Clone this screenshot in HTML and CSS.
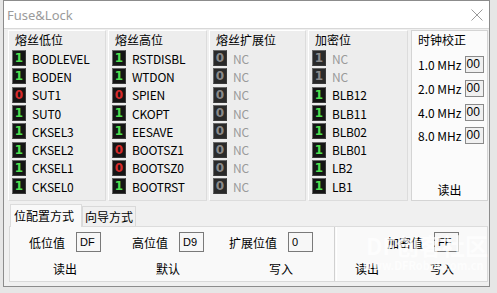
FILE: index.html
```html
<!DOCTYPE html>
<html lang="zh">

<head>
    <meta charset="UTF-8">
    <title>Fuse&amp;Lock</title>
    <link rel="stylesheet" href="styles.css">
</head>

<body>
    <div class="window">
        <!-- Title bar -->
        <div class="titlebar">
            <span class="title">Fuse&amp;Lock</span>
            <svg class="close" width="12" height="12" viewBox="0 0 12 12">
                <path d="M0.5 0.5 L11.5 11.5 M11.5 0.5 L0.5 11.5" stroke="#9a9a9a" stroke-width="1" fill="none"/>
            </svg>
        </div>

        <div class="content">
            <!-- Fuse bit groups -->
            <div class="groups">
                <div class="group g1">
                    <div class="group-title">熔丝低位</div>
                    <ul class="bits">
                        <li><span class="bit on">1</span>BODLEVEL</li>
                        <li><span class="bit on">1</span>BODEN</li>
                        <li><span class="bit off">0</span>SUT1</li>
                        <li><span class="bit on">1</span>SUT0</li>
                        <li><span class="bit on">1</span>CKSEL3</li>
                        <li><span class="bit on">1</span>CKSEL2</li>
                        <li><span class="bit on">1</span>CKSEL1</li>
                        <li><span class="bit on">1</span>CKSEL0</li>
                    </ul>
                </div>
                <div class="group g2">
                    <div class="group-title">熔丝高位</div>
                    <ul class="bits">
                        <li><span class="bit on">1</span>RSTDISBL</li>
                        <li><span class="bit on">1</span>WTDON</li>
                        <li><span class="bit off">0</span>SPIEN</li>
                        <li><span class="bit on">1</span>CKOPT</li>
                        <li><span class="bit on">1</span>EESAVE</li>
                        <li><span class="bit off">0</span>BOOTSZ1</li>
                        <li><span class="bit off">0</span>BOOTSZ0</li>
                        <li><span class="bit on">1</span>BOOTRST</li>
                    </ul>
                </div>
                <div class="group g3">
                    <div class="group-title">熔丝扩展位</div>
                    <ul class="bits">
                        <li class="nc"><span class="bit dis">0</span>NC</li>
                        <li class="nc"><span class="bit dis">0</span>NC</li>
                        <li class="nc"><span class="bit dis">0</span>NC</li>
                        <li class="nc"><span class="bit dis">0</span>NC</li>
                        <li class="nc"><span class="bit dis">0</span>NC</li>
                        <li class="nc"><span class="bit dis">0</span>NC</li>
                        <li class="nc"><span class="bit dis">0</span>NC</li>
                        <li class="nc"><span class="bit dis">0</span>NC</li>
                    </ul>
                </div>
                <div class="group g4">
                    <div class="group-title">加密位</div>
                    <ul class="bits">
                        <li class="nc"><span class="bit dis">1</span>NC</li>
                        <li class="nc"><span class="bit dis">1</span>NC</li>
                        <li><span class="bit on">1</span>BLB12</li>
                        <li><span class="bit on">1</span>BLB11</li>
                        <li><span class="bit on">1</span>BLB02</li>
                        <li><span class="bit on">1</span>BLB01</li>
                        <li><span class="bit on">1</span>LB2</li>
                        <li><span class="bit on">1</span>LB1</li>
                    </ul>
                </div>
                <div class="group clock">
                    <div class="group-title">时钟校正</div>
                    <div class="clock-rows">
                        <div class="clock-row"><span>1.0 MHz</span><span class="box small">00</span></div>
                        <div class="clock-row"><span>2.0 MHz</span><span class="box small">00</span></div>
                        <div class="clock-row"><span>4.0 MHz</span><span class="box small">00</span></div>
                        <div class="clock-row"><span>8.0 MHz</span><span class="box small">00</span></div>
                    </div>
                    <div class="clock-read">读出</div>
                </div>
            </div>

            <!-- Tabs -->
            <div class="tabs">
                <div class="tab active">位配置方式</div>
                <div class="tab">向导方式</div>
            </div>
            <div class="tab-panel">
                <div class="section left">
                    <div class="field-col">
                        <div class="field"><span>低位值</span><span class="box">DF</span></div>
                        <div class="btn">读出</div>
                    </div>
                    <div class="field-col">
                        <div class="field"><span>高位值</span><span class="box">D9</span></div>
                        <div class="btn">默认</div>
                    </div>
                    <div class="field-col">
                        <div class="field"><span>扩展位值</span><span class="box">0</span></div>
                        <div class="btn shift">写入</div>
                    </div>
                </div>
                <div class="splitter"></div>
                <div class="section right">
                    <div class="field lock"><span>加密值</span><span class="box">FF</span></div>
                    <div class="btn-row">
                        <div class="btn b1">读出</div>
                        <div class="btn b2">写入</div>
                    </div>
                </div>
            </div>
        </div>

        <!-- Watermark laid over the dialog -->
        <div class="watermark">
            <div class="wm-big">DF创客社区</div>
            <div class="wm-small">www.DFRobot.com.cn</div>
        </div>
    </div>
</body>

</html>
```

FILE: styles.css
```css
/* Windows style fuse dialog */
body {
    margin: 0;
    background: #e6e6e6;
    font-family: "Noto Sans CJK SC", "Noto Sans", sans-serif;
    font-size: 12px;
    color: #000;
}

.window {
    position: relative;
    margin-left: 3px;
    width: 485px;
    height: 285px;
    border: 1px solid #8c8c8c;
    background: #f0f0f0;
    overflow: hidden;
}

.titlebar {
    height: 27px;
    background: #fff;
    border-bottom: 1px solid #d8d8d8;
    display: flex;
    align-items: center;
    justify-content: space-between;
    padding: 0 5px 0 3px;
}

.title {
    font-family: "Noto Sans", sans-serif;
    font-size: 13px;
    color: #9b9b9b;
}

.close {
    margin-right: 1px;
    margin-top: 1px;
}

.content {
    padding: 1px 1px 0 4px;
}

.groups {
    display: flex;
    gap: 2px;
    height: 171px;
}

.group {
    background: #ededed;
    border: 1px solid #dcdcdc;
    border-top-color: #fff;
    border-left-color: #fff;
    box-sizing: border-box;
}

.g1 { width: 98px; }
.g2 { width: 99px; }
.g3 { width: 97px; }
.g4 { width: 100px; margin-right: 1px; }

.group-title {
    height: 17px;
    line-height: 17px;
    padding-left: 6px;
    font-size: 12px;
}

.bits {
    list-style: none;
    margin: 1px 0 0;
    padding: 0 0 0 3px;
}

.bits li {
    height: 18.3px;
    display: flex;
    align-items: center;
    letter-spacing: -0.2px;
}

.bits li.nc {
    color: #9a9a9a;
}

.bit {
    width: 12px;
    height: 14px;
    margin-right: 6px;
    border: 1px solid;
    border-color: #6a6a6a #3a3a3a #3a3a3a #6a6a6a;
    background: #151515;
    font-family: "DejaVu Sans", sans-serif;
    font-weight: bold;
    font-size: 12px;
    line-height: 14px;
    text-align: center;
    letter-spacing: 0;
}

.bit.on { color: #4fe04f; }
.bit.off { color: #d62b2b; }
.bit.dis {
    background: #2a2a2a;
    color: #8a8a8a;
}

.clock {
    width: 77px;
    background: #fbfbfb;
    border: 1px solid #d4d4d4;
    display: flex;
    flex-direction: column;
}

.clock-rows {
    padding: 5px 0 0 6px;
}

.clock-row {
    height: 23.7px;
    display: flex;
    align-items: center;
    gap: 3px;
}

.box {
    display: inline-block;
    box-sizing: border-box;
    width: 25px;
    height: 20px;
    line-height: 18px;
    padding-left: 3px;
    border: 1px solid #7a7a7a;
    background: #f7f7f7;
    font-family: "Liberation Sans", sans-serif;
    font-size: 11px;
}

.box.small {
    width: 19px;
    height: 17px;
    line-height: 15px;
    padding-left: 1px;
    font-size: 12px;
    background: #f0f0f0;
    border-color: #8a8a8a;
}

.clock-read {
    margin-top: auto;
    margin-bottom: 1px;
    height: 18px;
    text-align: center;
}

.tabs {
    display: flex;
    align-items: flex-end;
    margin-top: 3px;
    height: 22px;
    padding-left: 2px;
}

.tab {
    height: 19px;
    line-height: 19px;
    padding: 0 2px;
    background: #f0f0f0;
    border: 1px solid #d9d9d9;
    border-bottom: none;
}

.tab.active {
    height: 22px;
    line-height: 22px;
    background: #f9f9f9;
    border-color: #dcdcdc;
    padding: 0 7px 0 3px;
    position: relative;
    z-index: 1;
    margin-bottom: -1px;
}

.tab-panel {
    display: flex;
    height: 56px;
    box-sizing: border-box;
    margin-left: 1px;
    background: #f9f9f9;
    border: 1px solid #d9d9d9;
    border-top-color: #dcdcdc;
}

.section {
    padding-top: 5px;
}

.section.left {
    width: 327px;
    display: flex;
    padding-left: 19px;
    box-sizing: border-box;
}

.field-col {
    display: flex;
    flex-direction: column;
}

.field-col:nth-child(1) { width: 103px; }
.field-col:nth-child(2) { width: 97px; }

.field {
    display: flex;
    align-items: center;
    gap: 11px;
    height: 20px;
}

.btn {
    margin-top: 8px;
    height: 18px;
    line-height: 18px;
    text-align: center;
}

.field-col .btn {
    width: 72px;
}

.field-col .btn.shift {
    width: 104px;
}

.splitter {
    width: 3px;
    border-left: 1px solid #d0d0d0;
    border-right: 1px solid #fff;
    box-sizing: border-box;
}

.section.right {
    flex: 1;
}

.field.lock {
    padding-left: 50px;
}

.btn-row {
    display: flex;
}

.btn.b1 { width: 60px; }
.btn.b2 { width: 90px; }

/* Watermark */
.watermark {
    position: absolute;
    left: 362px;
    top: 230px;
    color: rgba(255, 255, 255, 0.7);
    font-family: "Noto Sans CJK SC", sans-serif;
    font-weight: bold;
    pointer-events: none;
}

.wm-big {
    font-size: 23px;
    line-height: 28px;
}

.wm-small {
    font-size: 11px;
    line-height: 13px;
    margin-left: -3px;
}
```
